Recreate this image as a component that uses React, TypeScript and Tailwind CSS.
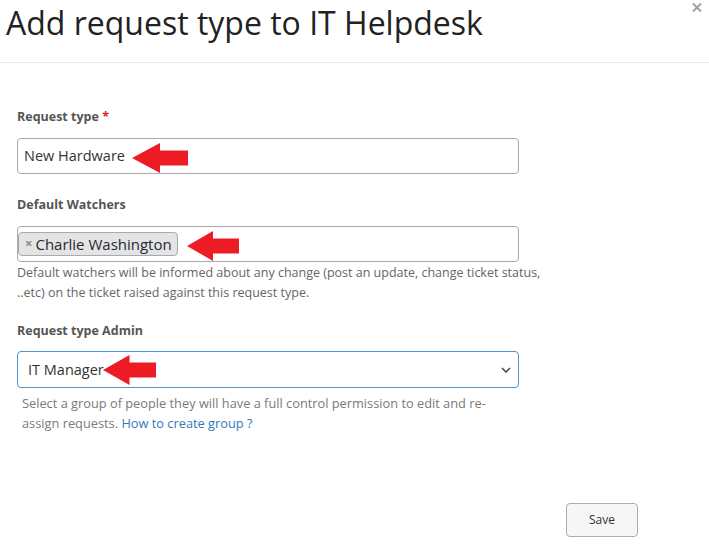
import React from 'react';

const font = { fontFamily: '"Open Sans", "Noto Sans", sans-serif' };

function RedArrow({ className }: { className: string }) {
  return (
    <svg
      className={`absolute ${className}`}
      viewBox="0 0 54 30"
      preserveAspectRatio="none"
    >
      <polygon points="0,15 27,0 27,7.5 54,7.5 54,22.5 27,22.5 27,30" fill="#ed1c24" />
    </svg>
  );
}

export default function App() {
  return (
    <div className="relative w-[709px] h-[544px] bg-white text-[#333]" style={font}>
      {/* header */}
      <div className="h-[63px] border-b border-[#e8e8e8] pl-[6px] pt-[3px]">
        <h1 className="text-[32px] leading-[40px] font-normal text-[#222]">
          Add request type to IT Helpdesk
        </h1>
      </div>
      <button type="button" className="absolute left-[692px] top-[2px] w-[10px] h-[11px]">
        <svg viewBox="0 0 10 11" className="w-[10px] h-[11px]">
          <path d="M1 1.5 L9 9.5 M9 1.5 L1 9.5" stroke="#a3a3a3" strokeWidth="2" />
        </svg>
      </button>

      <div className="pl-[17px]">
        {/* request type */}
        <label className="block mt-[44px] text-[12.5px] leading-5 font-bold text-[#555]">
          Request type <span className="text-[#e02020]">*</span>
        </label>
        <div className="mt-[11px] w-[502px] h-[36px] border border-[#aaa] rounded-[4px] flex items-center pl-[6px] text-[14.5px]">
          New Hardware
        </div>

        {/* default watchers */}
        <label className="block mt-[21px] text-[12.5px] leading-5 font-bold text-[#555]">
          Default Watchers
        </label>
        <div className="mt-[11px] w-[502px] h-[36px] border border-[#aaa] rounded-[4px] flex items-start pt-[5px]">
          <span className="h-[24px] w-[160px] flex items-center bg-[#e4e4e4] border border-[#aaa] rounded-[4px] pl-[6px] text-[15px] text-[#1f2a36]">
            <span className="text-[#888] text-[13px] font-bold mr-[3px]">×</span>
            Charlie Washington
          </span>
        </div>
        <p className="mt-[1px] text-[12.5px] leading-5 text-[#666]">
          Default watchers will be informed about any change (post an update, change ticket status,
          <br />
          ..etc) on the ticket raised against this request type.
        </p>

        {/* admin */}
        <label className="block mt-[18px] text-[12.5px] leading-5 font-bold text-[#555]">
          Request type Admin
        </label>
        <div className="mt-[10px] w-[502px] h-[37px] border border-[#4c94cf] rounded-[4px] flex items-center justify-between pl-[10px] pr-[7px] text-[14.5px]">
          <span>IT Manager</span>
          <svg viewBox="0 0 10 6" className="w-[10px] h-[6px]">
            <path d="M1 1 L5 5 L9 1" stroke="#444" strokeWidth="1.5" fill="none" />
          </svg>
        </div>
        <p className="mt-[5px] pl-[5px] text-[12.8px] leading-5 text-[#7a7a7a]">
          Select a group of people they will have a full control permission to edit and re-
          <br />
          assign requests. <a className="text-[#337ab7]">How to create group ?</a>
        </p>
      </div>

      <div className="flex justify-end pr-[71px] mt-[70px]">
        <button
          type="button"
          className="w-[72px] h-[34px] bg-[#f6f6f6] border border-[#adadad] rounded-[4px] text-[12px] text-[#333]"
        >
          Save
        </button>
      </div>

      <RedArrow className="left-[132px] top-[143px] w-[56px] h-[30px]" />
      <RedArrow className="left-[187px] top-[231px] w-[52px] h-[30px]" />
      <RedArrow className="left-[103px] top-[355px] w-[53px] h-[30px]" />
    </div>
  );
}
